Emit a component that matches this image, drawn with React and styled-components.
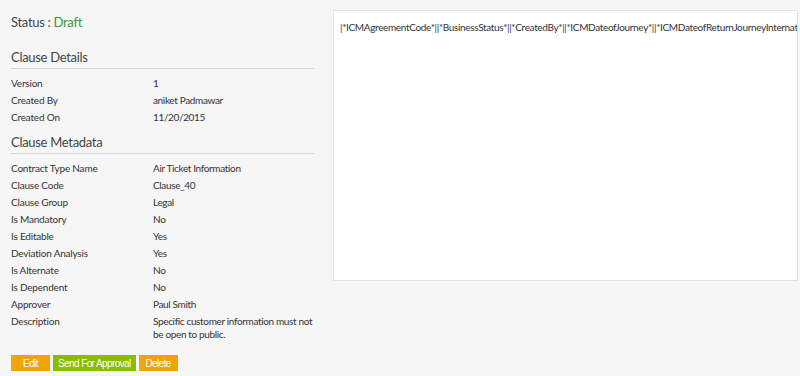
import styled, { createGlobalStyle } from 'styled-components';

const GlobalStyle = createGlobalStyle`
  html, body {
    margin: 0;
    padding: 0;
    background: #f6f6f6;
  }
  body {
    font-family: Lato, 'Open Sans', sans-serif;
    color: #333;
  }
`;

const details = [
  { label: 'Version', value: '1' },
  { label: 'Created By', value: 'aniket Padmawar' },
  { label: 'Created On', value: '11/20/2015' },
];

const metadata = [
  { label: 'Contract Type Name', value: 'Air Ticket Information' },
  { label: 'Clause Code', value: 'Clause_40' },
  { label: 'Clause Group', value: 'Legal' },
  { label: 'Is Mandatory', value: 'No' },
  { label: 'Is Editable', value: 'Yes' },
  { label: 'Deviation Analysis', value: 'Yes' },
  { label: 'Is Alternate', value: 'No' },
  { label: 'Is Dependent', value: 'No' },
  { label: 'Approver', value: 'Paul Smith' },
  { label: 'Description', value: 'Specific customer information must not be open to public.' },
];

const InfoTable = ({ rows }) => (
  <Table>
    {rows.map((row) => (
      <Row key={row.label}>
        <Label>{row.label}</Label>
        <Value>{row.value}</Value>
      </Row>
    ))}
  </Table>
);

const App = () => {
  return (
    <>
      <GlobalStyle />
      <Page>
        <Left>
          <Status>
            Status : <span>Draft</span>
          </Status>
          <Heading>Clause Details</Heading>
          <InfoTable rows={details} />
          <Heading>Clause Metadata</Heading>
          <InfoTable rows={metadata} />
          <Actions>
            <Button $color="#f0a30a">Edit</Button>
            <Button $color="#8cbc00">Send For Approval</Button>
            <Button $color="#f0a30a">Delete</Button>
          </Actions>
        </Left>
        <Preview>
          |*ICMAgreementCode*||*BusinessStatus*||*CreatedBy*||*ICMDateofJourney*||*ICMDateofReturnJourneyInternational*|
        </Preview>
      </Page>
    </>
  );
};

const Page = styled.div`
  display: flex;
  align-items: flex-start;
  gap: 19px;
  padding: 10px 2px 0 11px;
  height: 376px;
  box-sizing: border-box;
`;

const Left = styled.div`
  width: 303px;
  flex-shrink: 0;
`;

const Status = styled.div`
  font-size: 13px;
  letter-spacing: -0.3px;
  color: #444;
  margin-top: 2px;
  line-height: 20px;

  span {
    color: #339933;
  }
`;

const Heading = styled.h3`
  margin: 15px 0 0;
  font-size: 13px;
  letter-spacing: -0.3px;
  font-weight: normal;
  color: #444;
  line-height: 20px;
  padding-bottom: 1px;
  border-bottom: 1px solid #d6d6d6;

  & + div {
    margin-top: 6px;
  }
`;

const Table = styled.div`
  display: flex;
  flex-direction: column;
  margin-right: -8px;

  & + h3 {
    margin-top: 6px;
  }
`;

const Row = styled.div`
  display: grid;
  grid-template-columns: 142px 1fr;
  font-size: 10px;
  letter-spacing: -0.2px;
  line-height: 17px;
  color: #333;
`;

const Label = styled.div``;

const Value = styled.div`
  letter-spacing: -0.35px;
  line-height: 13px;
  padding: 2px 0;
`;

const Actions = styled.div`
  display: flex;
  gap: 3px;
  margin-top: 12px;
`;

const Button = styled.button`
  border: none;
  background: ${(p) => p.$color};
  color: #fff;
  font-family: 'Liberation Sans', Arial, sans-serif;
  font-size: 10px;
  letter-spacing: -0.6px;
  height: 16px;
  padding: 0 5px;
  min-width: 39px;
  cursor: pointer;
`;

const Preview = styled.div`
  flex: 1;
  min-width: 0;
  height: 271px;
  box-sizing: border-box;
  background: #fff;
  border: 1px solid #e2e2e2;
  padding: 10px 6px;
  font-size: 10px;
  letter-spacing: -0.35px;
  line-height: 13px;
  color: #333;
  white-space: nowrap;
  overflow: hidden;
`;

export default App;
